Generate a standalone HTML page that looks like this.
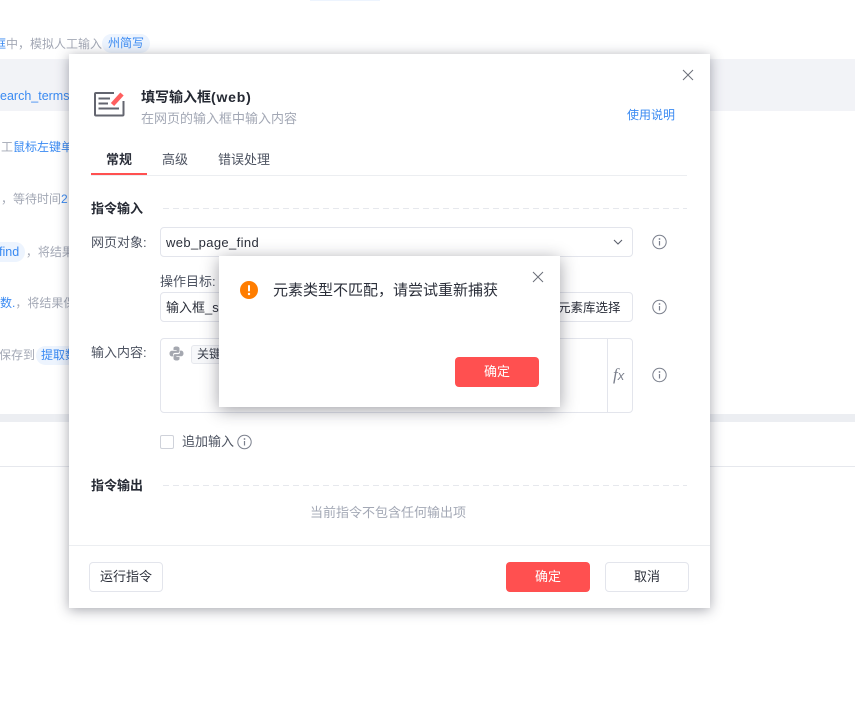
<!DOCTYPE html>
<html>
<head>
<meta charset="utf-8">
<style>
html,body{margin:0;padding:0;background:#fff}
body{width:855px;height:720px;position:relative;overflow:hidden;font-family:"Liberation Sans","Noto Sans CJK SC",sans-serif;font-size:13px;color:#2b2f3a}
.a{position:absolute;white-space:nowrap}
.g{color:#a3a8b5;font-size:12px;line-height:18px}
.b{color:#3a8af2}
.dlg{position:absolute;left:69px;top:54px;width:641px;height:554px;background:#fff;box-shadow:0 2px 12px rgba(40,44,60,.42)}
.box{position:absolute;border:1px solid #e3e5ec;border-radius:4px;background:#fff;box-sizing:border-box}
.lbl{position:absolute;white-space:nowrap;font-size:13px;line-height:18px;color:#4d5361}
.h{position:absolute;white-space:nowrap;font-size:13px;line-height:18px;font-weight:bold;color:#252933}
.dash{position:absolute;height:1px;background:repeating-linear-gradient(90deg,#e6e8ed 0 6px,transparent 6px 10px)}
.btn{position:absolute;box-sizing:border-box;border-radius:4px;text-align:center;font-size:13px}
.red{background:#ff5050;color:#fff}
.wht{background:#fff;border:1px solid #e3e5ec;color:#2b2f3a}
svg{position:absolute;display:block}
</style>
</head>
<body>
<!-- background page -->
<div class="a" style="left:310px;top:0;width:70px;height:1px;background:#edf4fe"></div>
<div class="a g" style="left:-6px;top:35px"><span class="b">框</span>中，模拟人工输入</div>
<div class="a" style="left:102px;top:34px;width:48px;height:19px;background:#edf4fe;border-radius:10px;color:#3a8af2;font-size:12px;line-height:19px;text-align:center">州简写</div>
<div class="a" style="left:0;top:59px;width:855px;height:52px;background:#f2f3f7"></div>
<div class="a b" style="left:0;top:87px;font-size:12.5px;line-height:18px">earch_terms</div>
<div class="a g" style="left:1px;top:138px">工<span class="b">鼠标左键单</span></div>
<div class="a g" style="left:1px;top:190px">，等待时间<span class="b">2</span></div>
<div class="a" style="left:-10px;top:242px;width:35px;height:20px;background:#edf4fe;border-radius:10px"></div>
<div class="a g" style="left:-1px;top:243px"><span class="b" style="font-size:12.5px">find</span>&nbsp; ，将结果</div>
<div class="a g" style="left:0;top:294px"><span class="b">数.</span>，将结果保</div>
<div class="a g" style="left:-1px;top:346px">保存到</div>
<div class="a" style="left:36px;top:346px;width:50px;height:19px;background:#edf4fe;border-radius:10px;color:#3a8af2;font-size:12px;line-height:18px;padding-left:5px;box-sizing:border-box">提取数</div>
<div class="a" style="left:0;top:414px;width:855px;height:8px;background:#eceef2"></div>
<div class="a" style="left:0;top:466px;width:855px;height:1px;background:#e6e8ed"></div>

<!-- main dialog -->
<div class="dlg"></div>
<svg style="left:682px;top:69px" width="12" height="12" viewBox="0 0 12 12"><path d="M1 1L11 11M11 1L1 11" stroke="#6b6f79" stroke-width="1" fill="none"/></svg>
<svg style="left:93px;top:90px" width="33" height="27" viewBox="0 0 33 27">
<path d="M21 3H3Q2 3 2 4V24.500Q2 25.500 3 25.500H29.500Q30.500 25.500 30.500 24.500V11" fill="none" stroke="#63656f" stroke-width="2"/>
<path d="M5.500 8.500H17M5.500 13.500H15M5.500 18.500H26" stroke="#63656f" stroke-width="2" fill="none"/>
<path d="M19.500 14.500L29 4" stroke="#ff5f5f" stroke-width="4.500" fill="none"/>
</svg>
<div class="a" style="left:141px;top:87px;font-size:14px;line-height:20px;font-weight:bold;color:#252933">填写输入框<span style="letter-spacing:.8px">(web)</span></div>
<div class="a" style="left:141px;top:110px;font-size:13px;line-height:18px;color:#a3a8b5">在网页的输入框中输入内容</div>
<div class="a" style="left:627px;top:106px;font-size:12px;line-height:18px;color:#3a8af2">使用说明</div>

<div class="a" style="left:106px;top:151px;font-size:13px;line-height:18px;font-weight:bold;color:#2b2f3a">常规</div>
<div class="a" style="left:162px;top:151px;font-size:13px;line-height:18px;color:#4d5361">高级</div>
<div class="a" style="left:218px;top:151px;font-size:13px;line-height:18px;color:#4d5361">错误处理</div>
<div class="a" style="left:91px;top:175px;width:596px;height:1px;background:#eceef1"></div>
<div class="a" style="left:91px;top:173px;width:56px;height:2px;background:#ff5050"></div>

<div class="h" style="left:91px;top:200px">指令输入</div>
<div class="dash" style="left:163px;top:208px;width:524px"></div>

<div class="lbl" style="left:91px;top:234px">网页对象:</div>
<div class="box" style="left:160px;top:227px;width:473px;height:30px"></div>
<div class="a" style="left:166px;top:234px;font-size:13px;line-height:18px;color:#2b2f3a;letter-spacing:.38px">web_page_find</div>
<svg style="left:612px;top:238px" width="12" height="8" viewBox="0 0 12 8"><path d="M2 2L6 6L10 2" stroke="#5a5f6b" stroke-width="1.100" fill="none"/></svg>
<svg style="left:652px;top:234px" width="16" height="16" viewBox="0 0 16 16"><circle cx="7.500" cy="8" r="6.700" fill="none" stroke="#7a7f8c"/><path d="M7.500 7V11.500" stroke="#7a7f8c" stroke-width="1.200"/><circle cx="7.500" cy="5" r=".9" fill="#7a7f8c"/></svg>

<div class="lbl" style="left:160px;top:273px">操作目标:</div>
<div class="box" style="left:160px;top:292px;width:473px;height:30px"></div>
<div class="a" style="left:166px;top:299px;font-size:13px;line-height:18px;color:#2b2f3a">输入框_search</div>
<div class="a" style="left:558px;top:299px;font-size:12.500px;line-height:18px;color:#2b2f3a">元素库选择</div>
<svg style="left:652px;top:299px" width="16" height="16" viewBox="0 0 16 16"><circle cx="7.500" cy="8" r="6.700" fill="none" stroke="#7a7f8c"/><path d="M7.500 7V11.500" stroke="#7a7f8c" stroke-width="1.200"/><circle cx="7.500" cy="5" r=".9" fill="#7a7f8c"/></svg>

<div class="lbl" style="left:91px;top:344px">输入内容:</div>
<div class="box" style="left:160px;top:338px;width:473px;height:75px"></div>
<div class="a" style="left:607px;top:339px;width:1px;height:73px;background:#e3e5ec"></div>
<svg style="left:169px;top:346px" width="15" height="15" viewBox="0 0 15 15">
<path d="M7.400 0.500C4.500 0.500 4.500 1.800 4.500 2.500V4H7.600V4.700H3C1.500 4.700 .5 5.800 .5 7.500C.5 9.200 1.400 10.400 2.800 10.400H4V8.800C4 7.500 5 6.900 6.200 6.900H9C10 6.900 10.500 6.200 10.500 5.400V2.500C10.500 1.300 9.400 .5 7.400 .5Z" fill="#a5a8b0"/>
<path d="M7.600 14.500C10.500 14.500 10.500 13.200 10.500 12.500V11H7.400V10.300H12C13.500 10.300 14.500 9.200 14.500 7.500C14.500 5.800 13.600 4.600 12.200 4.600H11V6.200C11 7.500 10 8.100 8.800 8.100H6C5 8.100 4.500 8.800 4.500 9.600V12.500C4.500 13.700 5.600 14.500 7.600 14.500Z" fill="#a5a8b0"/>
</svg>
<div class="a" style="left:191px;top:345px;width:60px;height:19px;box-sizing:border-box;border:1px solid #e6e8ed;border-radius:3px;background:#f7f8fa;font-size:12px;line-height:17px;padding-left:5px;color:#3a3f4b">关键词</div>
<div class="a" style="left:613px;top:366px;font-size:15px;line-height:18px;color:#7a7f8c"><span style="font-family:'Liberation Serif',serif;font-style:italic;font-size:17px">f</span><span style="font-size:13px;font-style:italic">x</span></div>
<svg style="left:652px;top:367px" width="16" height="16" viewBox="0 0 16 16"><circle cx="7.500" cy="8" r="6.700" fill="none" stroke="#7a7f8c"/><path d="M7.500 7V11.500" stroke="#7a7f8c" stroke-width="1.200"/><circle cx="7.500" cy="5" r=".9" fill="#7a7f8c"/></svg>

<div class="a" style="left:160px;top:435px;width:14px;height:14px;box-sizing:border-box;border:1px solid #cfd2da;border-radius:2px;background:#fff"></div>
<div class="lbl" style="left:182px;top:433px">追加输入</div>
<svg style="left:237px;top:434px" width="16" height="16" viewBox="0 0 16 16"><circle cx="7.500" cy="8" r="6.700" fill="none" stroke="#7a7f8c"/><path d="M7.500 7V11.500" stroke="#7a7f8c" stroke-width="1.200"/><circle cx="7.500" cy="5" r=".9" fill="#7a7f8c"/></svg>

<div class="h" style="left:91px;top:477px">指令输出</div>
<div class="dash" style="left:163px;top:485px;width:524px"></div>
<div class="a" style="left:310px;top:504px;font-size:13px;line-height:18px;color:#a3a8b5">当前指令不包含任何输出项</div>

<div class="a" style="left:69px;top:545px;width:641px;height:1px;background:#eceef1"></div>
<div class="btn wht" style="left:89px;top:562px;width:74px;height:30px;line-height:28px">运行指令</div>
<div class="btn red" style="left:506px;top:562px;width:84px;height:30px;line-height:30px">确定</div>
<div class="btn wht" style="left:605px;top:562px;width:84px;height:30px;line-height:28px">取消</div>

<!-- alert -->
<div class="a" style="left:219px;top:256px;width:341px;height:151px;background:#fff;box-shadow:0 3px 16px rgba(30,32,45,.42)"></div>
<svg style="left:532px;top:271px" width="12" height="12" viewBox="0 0 12 12"><path d="M1 1L11 11M11 1L1 11" stroke="#6b6f79" stroke-width="1" fill="none"/></svg>
<svg style="left:240px;top:281px" width="18" height="18" viewBox="0 0 18 18"><circle cx="9" cy="9" r="9" fill="#ff7d00"/><rect x="8" y="4" width="2" height="6.500" rx="1" fill="#fff"/><circle cx="9" cy="13" r="1.200" fill="#fff"/></svg>
<div class="a" style="left:273px;top:281px;font-size:15px;line-height:20px;color:#2b2f3a">元素类型不匹配，请尝试重新捕获</div>
<div class="btn red" style="left:455px;top:357px;width:84px;height:30px;line-height:30px">确定</div>
</body>
</html>
